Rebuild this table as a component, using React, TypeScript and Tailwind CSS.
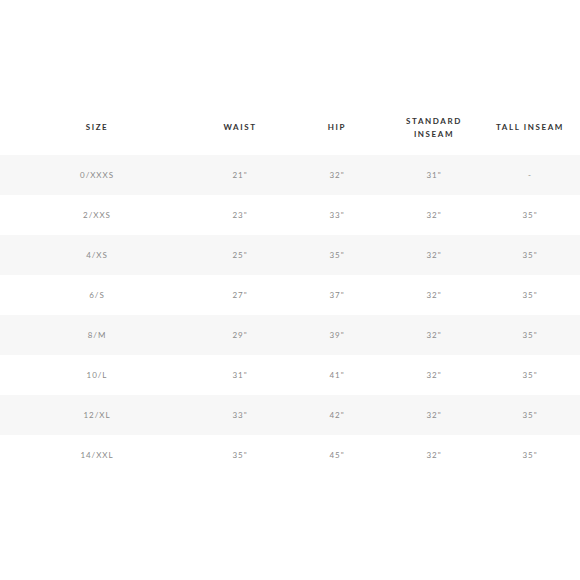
const headers = ['SIZE', 'WAIST', 'HIP', 'STANDARD\nINSEAM', 'TALL INSEAM'];

const rows = [
  ['0/XXXS', '21"', '32"', '31"', '-'],
  ['2/XXS', '23"', '33"', '32"', '35"'],
  ['4/XS', '25"', '35"', '32"', '35"'],
  ['6/S', '27"', '37"', '32"', '35"'],
  ['8/M', '29"', '39"', '32"', '35"'],
  ['10/L', '31"', '41"', '32"', '35"'],
  ['12/XL', '33"', '42"', '32"', '35"'],
  ['14/XXL', '35"', '45"', '32"', '35"'],
];

const cols = 'grid grid-cols-[194px_92px_102px_92px_100px]';

export default function App() {
  return (
    <div className="w-[580px] h-[580px] bg-white font-['Lato','Liberation_Sans',sans-serif]">
      <div className="pt-[100px]">
        <div className={`${cols} h-[55px] items-center`}>
          {headers.map((h) => (
            <div
              key={h}
              className="text-center text-[8px] leading-[13px] font-bold tracking-[0.2em] text-[#333] whitespace-pre-line"
            >
              {h}
            </div>
          ))}
        </div>
        {rows.map((r, i) => (
          <div
            key={r[0]}
            className={`${cols} h-[40px] items-center ${i % 2 === 0 ? 'bg-[#f7f7f7]' : 'bg-white'}`}
          >
            {r.map((c, j) => (
              <div key={j} className="text-center text-[8px] tracking-[0.12em] text-[#8a8a8a]">
                {c}
              </div>
            ))}
          </div>
        ))}
      </div>
    </div>
  );
}
